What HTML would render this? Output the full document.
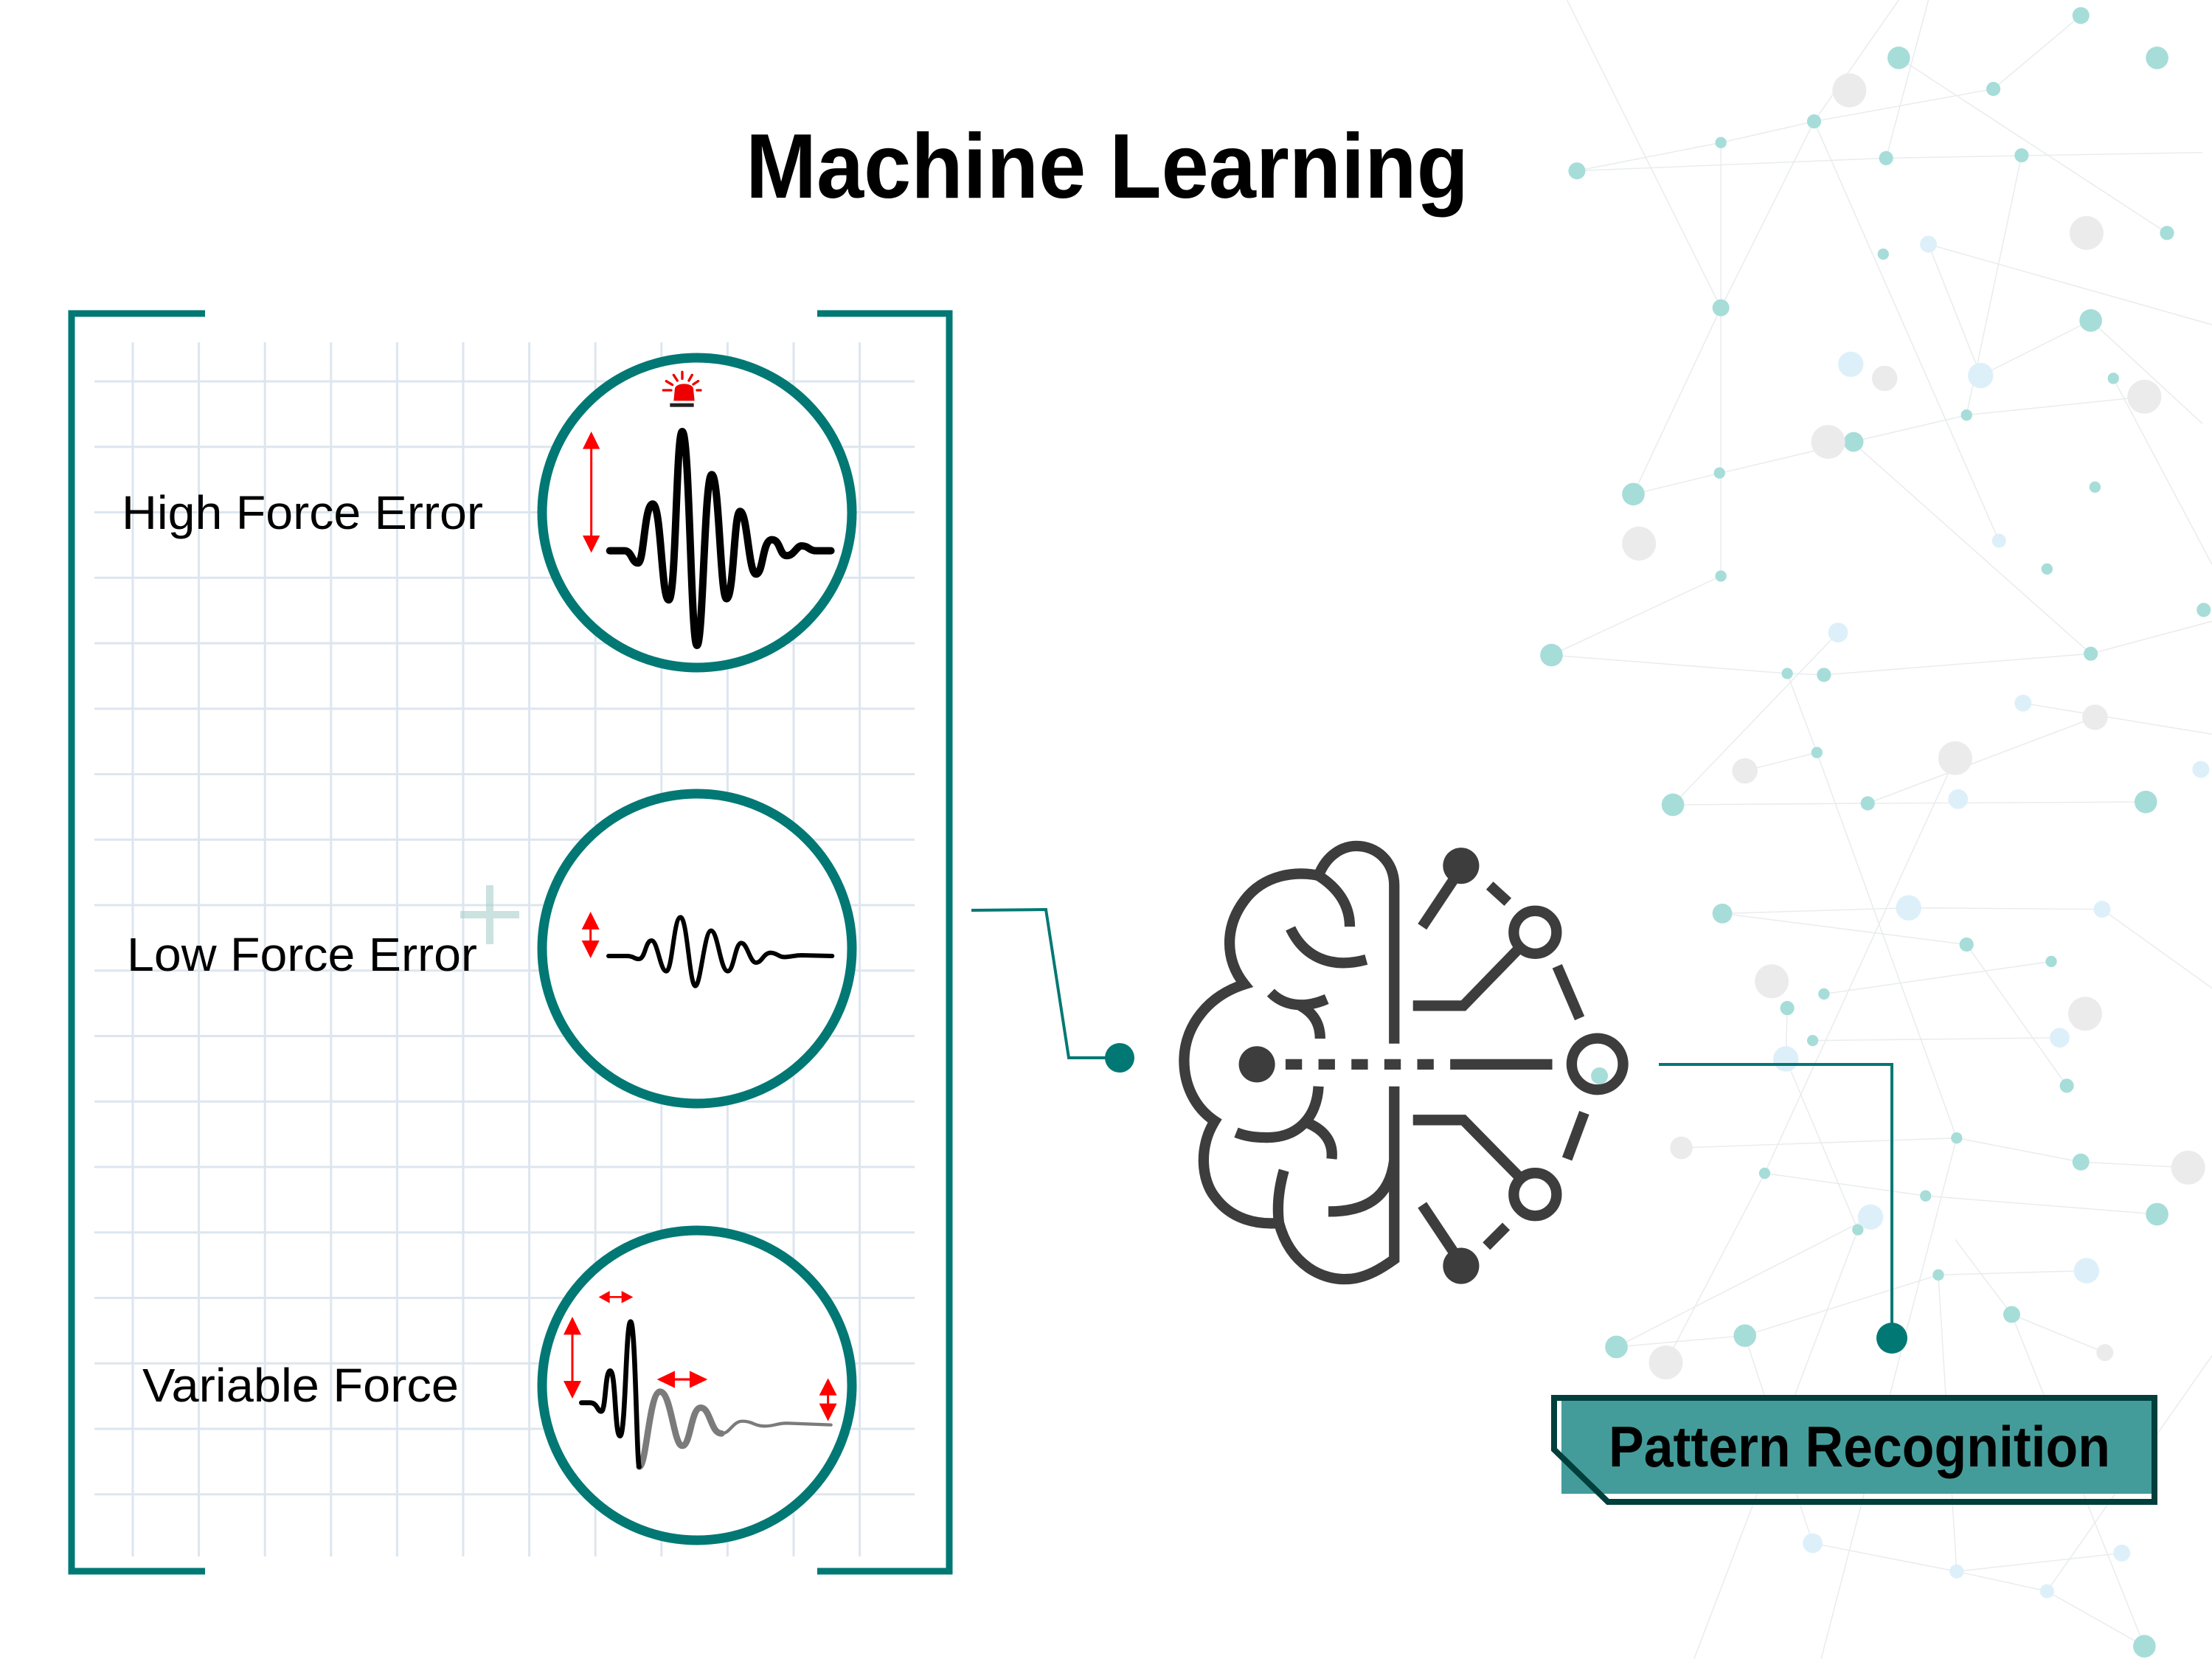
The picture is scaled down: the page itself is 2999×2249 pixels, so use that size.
<!DOCTYPE html>
<html><head><meta charset="utf-8"><style>
html,body{margin:0;padding:0;background:#fff;}
body{width:2999px;height:2249px;overflow:hidden;position:relative;}
svg{position:absolute;left:0;top:0;}
</style></head><body>
<svg width="2999" height="2249" viewBox="0 0 2999 2249" xmlns="http://www.w3.org/2000/svg">
<!-- background network (small coords x1.914) -->
<g transform="scale(1.914)">
<g stroke="#e9ecee" stroke-width="0.8" fill="none">
<path d="M1117,121 L1219,101 L1285,86 L1412,63 M1117,121 L1336,112 L1560,108 M1219,101 L1219,408 M1285,86 L1416,383 M1285,86 L1345,0 M1345,41 L1535,165 M1412,63 L1474,11 M1336,112 L1366,0 M1219,218 L1285,86 M1219,218 L1157,350 M1157,350 L1219,335 L1312,313 L1481,463 M1312,313 L1393,294 L1519,281 M1393,294 L1432,110 M1481,227 L1560,300 M1481,227 L1403,266 L1366,173 M1099,464 L1266,477 L1292,478 L1481,463 L1567,440 M1099,464 L1219,408 M1266,477 L1287,533 L1236,546 M1185,570 L1323,569 L1520,568 M1185,570 L1302,448 M1287,533 L1386,806 M1323,569 L1484,508 M1220,647 L1352,643 L1489,644 M1220,647 L1393,669 L1464,769 M1292,704 L1453,681 M1266,714 L1265,750 L1316,871 M1284,737 L1459,735 M1191,813 L1386,806 L1474,823 L1550,827 M1250,831 L1364,847 L1528,860 M1145,954 L1236,946 L1373,903 L1478,900 M1145,954 L1325,862 M1385,878 L1425,931 L1491,958 M1236,946 L1284,1093 L1386,1113 L1450,1127 L1519,1166 M1386,1113 L1503,1100 M1373,903 L1386,1113 M1425,931 L1519,1166 M1180,965 L1250,831 M1290,1175 L1386,806 M1200,1175 L1316,871 M1450,1127 L1567,960 M1366,173 L1567,230 M1110,0 L1219,218 M1497,268 L1567,400 M1433,498 L1567,520 M1385,537 L1250,831 M1489,644 L1567,700"/>
</g>
<g fill="#a6ddd8">
<circle cx="1117" cy="121" r="6"/><circle cx="1219" cy="101" r="4"/><circle cx="1285" cy="86" r="5"/><circle cx="1345" cy="41" r="8"/><circle cx="1412" cy="63" r="5"/><circle cx="1474" cy="11" r="6"/><circle cx="1528" cy="41" r="8"/><circle cx="1336" cy="112" r="5"/><circle cx="1432" cy="110" r="5"/><circle cx="1535" cy="165" r="5"/><circle cx="1334" cy="180" r="4"/><circle cx="1219" cy="218" r="6"/><circle cx="1481" cy="227" r="8"/><circle cx="1497" cy="268" r="4"/><circle cx="1393" cy="294" r="4"/><circle cx="1313" cy="313" r="7"/><circle cx="1218" cy="335" r="4"/><circle cx="1157" cy="350" r="8"/><circle cx="1484" cy="345" r="4"/><circle cx="1219" cy="408" r="4"/><circle cx="1450" cy="403" r="4"/><circle cx="1561" cy="432" r="5"/><circle cx="1099" cy="464" r="8"/><circle cx="1481" cy="463" r="5"/><circle cx="1266" cy="477" r="4"/><circle cx="1292" cy="478" r="5"/><circle cx="1287" cy="533" r="4"/><circle cx="1185" cy="570" r="8"/><circle cx="1323" cy="569" r="5"/><circle cx="1520" cy="568" r="8"/><circle cx="1220" cy="647" r="7"/><circle cx="1393" cy="669" r="5"/><circle cx="1453" cy="681" r="4"/><circle cx="1292" cy="704" r="4"/><circle cx="1266" cy="714" r="5"/><circle cx="1284" cy="737" r="4"/><circle cx="1464" cy="769" r="5"/><circle cx="1386" cy="806" r="4"/><circle cx="1474" cy="823" r="6"/><circle cx="1250" cy="831" r="4"/><circle cx="1364" cy="847" r="4"/><circle cx="1316" cy="871" r="4"/><circle cx="1528" cy="860" r="8"/><circle cx="1373" cy="903" r="4"/><circle cx="1425" cy="931" r="6"/><circle cx="1145" cy="954" r="8"/><circle cx="1236" cy="946" r="8"/><circle cx="1519" cy="1166" r="8"/><circle cx="1133" cy="762" r="6"/>
</g>
<g fill="#ebebeb">
<circle cx="1310" cy="64" r="12"/><circle cx="1478" cy="165" r="12"/><circle cx="1335" cy="268" r="9"/><circle cx="1519" cy="281" r="12"/><circle cx="1295" cy="313" r="12"/><circle cx="1161" cy="385" r="12"/><circle cx="1484" cy="508" r="9"/><circle cx="1385" cy="537" r="12"/><circle cx="1236" cy="546" r="9"/><circle cx="1255" cy="695" r="12"/><circle cx="1477" cy="718" r="12"/><circle cx="1191" cy="813" r="8"/><circle cx="1550" cy="827" r="12"/><circle cx="1180" cy="965" r="12"/><circle cx="1491" cy="958" r="6"/>
</g>
<g fill="#ddf0fa">
<circle cx="1366" cy="173" r="6"/><circle cx="1311" cy="258" r="9"/><circle cx="1403" cy="266" r="9"/><circle cx="1416" cy="383" r="5"/><circle cx="1302" cy="448" r="7"/><circle cx="1433" cy="498" r="6"/><circle cx="1387" cy="566" r="7"/><circle cx="1352" cy="643" r="9"/><circle cx="1489" cy="644" r="6"/><circle cx="1265" cy="750" r="9"/><circle cx="1459" cy="735" r="7"/><circle cx="1325" cy="862" r="9"/><circle cx="1478" cy="900" r="9"/><circle cx="1284" cy="1093" r="7"/><circle cx="1386" cy="1113" r="5"/><circle cx="1450" cy="1127" r="5"/><circle cx="1503" cy="1100" r="6"/><circle cx="1559" cy="545" r="6"/>
</g>
</g>

<!-- grid -->
<g stroke="#dde6ef" stroke-width="3">
<path d="M180,464V2110 M269.6,464V2110 M359.2,464V2110 M448.8,464V2110 M538.4,464V2110 M628,464V2110 M717.6,464V2110 M807.2,464V2110 M896.8,464V2110 M986.4,464V2110 M1076,464V2110 M1165.6,464V2110"/>
<path d="M128,517H1240 M128,605.75H1240 M128,694.5H1240 M128,783.25H1240 M128,872H1240 M128,960.75H1240 M128,1049.5H1240 M128,1138.25H1240 M128,1227H1240 M128,1315.75H1240 M128,1404.5H1240 M128,1493.25H1240 M128,1582H1240 M128,1670.75H1240 M128,1759.5H1240 M128,1848.25H1240 M128,1937H1240 M128,2025.75H1240"/>
</g>
<!-- faint plus -->
<g stroke="#a9cfcc" stroke-width="10" opacity="0.6"><path d="M664,1200V1280 M624,1240H704"/></g>

<!-- brackets -->
<g stroke="#027874" stroke-width="9" fill="none">
<path d="M278,425H97V2130H278"/>
<path d="M1108,425H1287V2130H1108"/>
</g>

<!-- title -->
<text x="1501" y="268" text-anchor="middle" font-family="'Liberation Sans',sans-serif" font-weight="bold" font-size="124" textLength="980" lengthAdjust="spacingAndGlyphs" fill="#000">Machine Learning</text>

<!-- labels -->
<g font-family="'Liberation Sans',sans-serif" font-size="64" fill="#000">
<text x="165" y="717" textLength="490" lengthAdjust="spacingAndGlyphs">High Force Error</text>
<text x="172" y="1316" textLength="475" lengthAdjust="spacingAndGlyphs">Low Force Error</text>
<text x="193" y="1900" textLength="429" lengthAdjust="spacingAndGlyphs">Variable Force</text>
</g>

<!-- circles -->
<g stroke="#027874" stroke-width="13" fill="#fff">
<circle cx="945" cy="695" r="210"/>
<circle cx="945" cy="1286" r="210"/>
<circle cx="945" cy="1878" r="210"/>
</g>

<!-- wave 1 -->
<g transform="translate(700,450) scale(0.3333)">
<path d="M380,890 L440,890 C470,890 470,940 495,940 C520,940 520,700 555,700 C590,700 590,1090 620,1090 C650,1090 650,405 675,405 C705,405 710,1275 735,1275 C760,1275 765,580 795,580 C825,580 830,1085 855,1085 C885,1085 885,730 910,730 C940,730 945,985 975,985 C1005,985 1000,845 1040,845 C1075,845 1070,910 1100,910 C1130,910 1140,870 1160,870 C1190,870 1190,890 1220,890 L1280,890" stroke="#000" stroke-width="30" fill="none" stroke-linecap="round" stroke-linejoin="round"/>
<path d="M305,470V835" stroke="#f00" stroke-width="9"/>
<path d="M270,476H340L305,405Z M270,828H340L305,898Z" fill="#f00"/>
<!-- siren -->
<path d="M640,280 L645,230 C650,205 715,205 720,230 L725,280Z" fill="#e00"/>
<rect x="625" y="290" width="97" height="15" fill="#222"/>
<g stroke="#e00" stroke-width="10" stroke-linecap="round">
<path d="M598,237H630 M735,237H750 M610,200L635,215 M740,200L720,213 M640,175L655,198 M715,175L702,198 M675,163V190"/>
</g>
</g>

<!-- wave 2 -->
<g transform="translate(760,1180) scale(0.3333)">
<path d="M195,348 L270,348 C300,348 300,362 320,360 C345,358 345,285 370,285 C395,285 405,410 430,410 C455,410 460,190 488,190 C515,190 525,470 548,470 C570,470 585,245 612,245 C640,245 650,410 680,410 C705,410 710,295 735,295 C760,295 770,375 795,375 C820,375 825,335 855,335 C880,335 890,355 915,352 C945,350 955,345 980,345 L1105,348" stroke="#000" stroke-width="18" fill="none" stroke-linecap="round"/>
<path d="M122,235V290" stroke="#f00" stroke-width="9"/>
<path d="M86,240H158L122,168Z M86,285H158L122,357Z" fill="#f00"/>
</g>

<!-- wave 3 -->
<g transform="translate(720,1660) scale(0.3333)">
<path d="M440,985 C470,985 480,680 525,680 C570,680 580,900 615,900 C650,900 650,745 690,745 C730,745 730,850 775,850" stroke="#7b7b7b" stroke-width="26" fill="none" stroke-linecap="round"/>
<path d="M775,850 C810,850 820,800 860,800 C900,800 910,820 950,820 C990,820 1000,808 1040,808 L1220,815" stroke="#7b7b7b" stroke-width="13" fill="none" stroke-linecap="round"/>
<path d="M205,725 L240,725 C270,725 270,760 285,760 C305,760 300,595 322,595 C345,595 340,860 362,860 C385,860 385,395 405,395 C425,395 430,985 440,985" stroke="#000" stroke-width="20" fill="none" stroke-linecap="round" stroke-linejoin="round"/>
<g fill="#f00">
<path d="M168,440V640" stroke="#f00" stroke-width="9"/>
<path d="M132,448H204L168,375Z M132,636H204L168,708Z"/>
<path d="M310,295H375" stroke="#f00" stroke-width="8"/>
<path d="M320,270V320L275,295Z M368,270V320L415,295Z"/>
<path d="M580,630H650" stroke="#f00" stroke-width="10"/>
<path d="M585,595V665L512,630Z M645,595V665L718,630Z"/>
<path d="M1208,690V730" stroke="#f00" stroke-width="9"/>
<path d="M1172,695H1244L1208,625Z M1172,728H1244L1208,800Z"/>
</g>
</g>

<!-- connectors -->
<g stroke="#027874" stroke-width="4" fill="none">
<path d="M1317,1234 L1418,1233 L1449,1434 L1518,1434"/>
<path d="M2249,1443 L2565,1443 L2565,1814"/>
</g>
<circle cx="1518" cy="1434" r="20" fill="#027874"/>
<circle cx="2565" cy="1814" r="21" fill="#027874"/>

<!-- brain -->
<g transform="translate(1580,1100) scale(0.44643)" fill="none" stroke="#3d3d3d" stroke-width="32">
<path d="M465,195 C490,130 540,105 580,105 C640,105 695,150 695,225 V705"/>
<path d="M465,195 C520,230 560,280 560,350"/>
<path d="M465,195 C400,180 300,190 240,270 C180,350 180,450 240,525 C130,560 60,650 57,750 C55,830 90,900 150,940 C100,1020 110,1120 150,1170 C200,1240 280,1255 345,1250"/>
<path d="M380,355 C420,440 500,480 610,450"/>
<path d="M320,550 C360,590 420,600 490,570"/>
<path d="M410,590 C455,615 470,650 470,690"/>
<path d="M465,835 C460,930 400,995 300,990 C270,990 240,985 215,975"/>
<path d="M430,945 C490,970 510,1010 505,1055"/>
<path d="M360,1090 C340,1160 340,1210 345,1250 C380,1380 480,1425 555,1420 C610,1418 660,1385 695,1360 V835"/>
<path d="M495,1215 C600,1215 680,1180 695,1060"/>
<path d="M365,768H415 M465,768H515 M565,768H615 M665,768H715 M765,768H815 M865,768H1175"/>
<path d="M880,200 L780,350 M985,225 L1040,275 M1070,420 L905,590 H752 M1190,470 L1258,628 M1272,915 L1220,1055 M1070,1105 L905,937 H752 M1035,1260 L975,1320 M780,1195 L880,1345"/>
<circle cx="1123" cy="367" r="65"/>
<circle cx="1312" cy="767" r="78"/>
<circle cx="1123" cy="1163" r="65"/>
</g>
<g transform="translate(1580,1100) scale(0.44643)" fill="#3d3d3d">
<circle cx="278" cy="768" r="55"/>
<circle cx="898" cy="165" r="55"/>
<circle cx="898" cy="1380" r="55"/>
</g>

<!-- Pattern Recognition box -->
<rect x="2117" y="1893" width="802" height="132" fill="#3f9a98" opacity="0.98"/>
<path d="M2107,1965 V1895 H2921 V2036 H2180 Z" fill="none" stroke="#003f3c" stroke-width="8" stroke-linejoin="miter"/>
<text x="2521" y="1988" text-anchor="middle" font-family="'Liberation Sans',sans-serif" font-weight="bold" font-size="78" textLength="680" lengthAdjust="spacingAndGlyphs" fill="#000">Pattern Recognition</text>
</svg>
</body></html>
